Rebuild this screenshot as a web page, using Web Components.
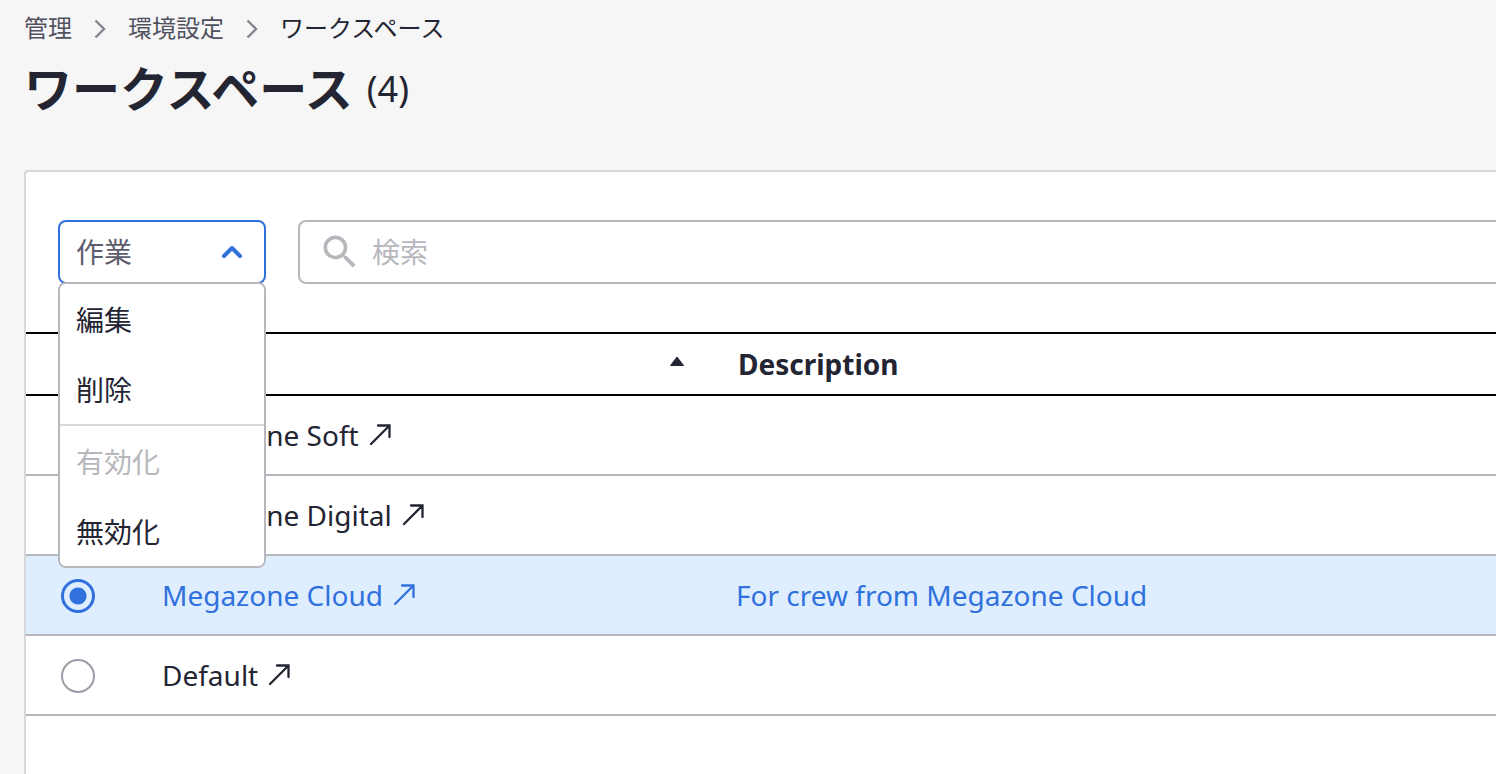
<!DOCTYPE html>
<html lang="ja">
<head>
<meta charset="utf-8">
<title>ワークスペース</title>
<style>
  body {
    margin: 0;
    background: #f6f6f6;
    color: #232533;
    font-family: "Noto Sans", "Noto Sans CJK JP", sans-serif;
    font-size: 28px;
    line-height: 40px;
    --blue: #3071dd;
    --line: #b7b7bd;
    --soft-line: #d8d8da;
    --muted: #b7b7bd;
    --selected: #deeeff;
  }
</style>
</head>
<body>
<workspace-page>
  <bread-crumb slot="breadcrumb"></bread-crumb>
  <page-title slot="title" count="4">ワークスペース</page-title>
  <action-menu slot="tools" label="作業"></action-menu>
  <search-box slot="tools" placeholder="検索"></search-box>
  <workspace-table></workspace-table>
</workspace-page>

<script>
const define = (name, html, setup) => {
  const template = document.createElement('template');
  template.innerHTML = '<style>*,*::before,*::after{box-sizing:border-box}</style>' + html;
  customElements.define(name, class extends HTMLElement {
    constructor() {
      super();
      this.attachShadow({ mode: 'open' }).append(template.content.cloneNode(true));
    }
    connectedCallback() { if (setup) setup(this, this.shadowRoot); }
  });
};

define('workspace-page', `
  <style>
    :host { display: flex; flex-direction: column; min-height: 100vh; padding-left: 24px; box-sizing: border-box; }
    header { padding-top: 8px; }
    main { flex: 1; margin-top: 46px; background: #fff; border: 2px solid var(--soft-line); border-width: 2px 0 0 2px; border-radius: 4px 0 0 0; }
    .tools { display: flex; gap: 32px; padding: 48px 0 48px 32px; }
  </style>
  <header><slot name="breadcrumb"></slot><slot name="title"></slot></header>
  <main><div class="tools"><slot name="tools"></slot></div><slot></slot></main>`);

define('bread-crumb', `
  <style>
    :host { display: block; font-size: 24px; }
    ol { display: flex; align-items: center; gap: 16px; margin: 0; padding: 0; list-style: none; }
    li { display: flex; align-items: center; gap: 16px; }
    a { color: #51515f; text-decoration: none; }
    svg { width: 24px; height: 24px; fill: none; stroke: #85858f; stroke-width: 2.4; }
  </style>
  <nav aria-label="breadcrumb"><ol>
    <li><a href="#admin">管理</a><svg viewBox="0 0 24 24" aria-hidden="true"><path d="M7.500 4.500 16 13l-8.500 8.500"/></svg></li>
    <li><a href="#preference">環境設定</a><svg viewBox="0 0 24 24" aria-hidden="true"><path d="M7.500 4.500 16 13l-8.500 8.500"/></svg></li>
    <li aria-current="page">ワークスペース</li>
  </ol></nav>`);

define('page-title', `
  <style>
    :host { display: block; }
    h1 { display: flex; align-items: center; gap: 14px; margin: 0; padding-top: 6px; font-size: 48px; line-height: 70px; font-weight: 700; }
    span { font-size: 36px; font-weight: 400; }
  </style>
  <h1><slot></slot><span></span></h1>`,
  (host, root) => { root.querySelector('span').textContent = '(' + host.getAttribute('count') + ')'; });

define('action-menu', `
  <style>
    :host { display: block; position: relative; z-index: 1; width: 208px; }
    button { font: inherit; color: inherit; background: #fff; text-align: left; cursor: pointer; }
    .toggle { display: flex; align-items: center; justify-content: space-between; width: 100%; height: 64px; padding: 0 16px; border: 2px solid var(--blue); border-radius: 8px; color: #5c5d6c; }
    svg { width: 32px; height: 32px; fill: none; stroke: var(--blue); stroke-width: 4; stroke-linecap: round; stroke-linejoin: round; }
    .menu { position: absolute; top: 62px; left: 0; right: 0; border: 2px solid var(--line); border-radius: 8px; background: #fff; overflow: hidden; }
    .menu button { display: block; width: 100%; height: 70px; padding: 2px 16px 0; border: 0; }
    .menu button:disabled { color: var(--muted); cursor: default; }
    hr { height: 2px; margin: 0; border: 0; background: var(--soft-line); }
  </style>
  <button class="toggle" type="button" aria-haspopup="menu" aria-expanded="true"><span></span>
    <svg viewBox="0 0 32 32" aria-hidden="true"><path d="m8 20 8-8 8 8"/></svg></button>
  <div class="menu" role="menu">
    <button type="button" role="menuitem">編集</button>
    <button type="button" role="menuitem">削除</button>
    <hr>
    <button type="button" role="menuitem" disabled>有効化</button>
    <button type="button" role="menuitem">無効化</button>
  </div>`,
  (host, root) => {
    root.querySelector('span').textContent = host.getAttribute('label');
    const toggle = root.querySelector('.toggle'), menu = root.querySelector('.menu');
    toggle.onclick = () => {
      menu.hidden = !menu.hidden;
      menu.style.display = menu.hidden ? 'none' : '';
      toggle.setAttribute('aria-expanded', String(!menu.hidden));
    };
  });

define('search-box', `
  <style>
    :host { display: block; flex: 1; min-width: 0; }
    label { display: flex; align-items: center; gap: 10px; height: 64px; padding-left: 18px; border: 2px solid var(--line); border-width: 2px 0 2px 2px; border-radius: 8px 0 0 8px; background: #fff; }
    svg { flex: none; width: 44px; height: 44px; fill: var(--muted); }
    input { flex: 1; min-width: 0; height: 40px; padding: 0; border: 0; outline: 0; background: none; font: inherit; color: inherit; }
    input::placeholder { color: var(--muted); opacity: 1; }
  </style>
  <label><svg viewBox="0 0 24 24" aria-hidden="true"><path d="M15.500 14h-.79l-.28-.27A6.470 6.470 0 0 0 16 9.500 6.500 6.500 0 1 0 9.500 16c1.610 0 3.090-.59 4.230-1.570l.27.28v.79l5 4.990L20.490 19l-4.990-5zm-6 0C7.010 14 5 11.990 5 9.500S7.010 5 9.500 5 14 7.010 14 9.500 11.990 14 9.500 14z"/></svg>
  <input type="text"></label>`,
  (host, root) => {
    const input = root.querySelector('input');
    input.placeholder = host.getAttribute('placeholder');
    input.setAttribute('aria-label', input.placeholder);
  });

define('workspace-table', `
  <style>
    :host { display: block; }
    table { width: 100%; table-layout: fixed; border-collapse: separate; border-spacing: 0; }
    .pick { width: 120px; }
    .name { width: 574px; }
    th, td { padding: 0 16px; text-align: left; vertical-align: middle; white-space: nowrap; border-bottom: 2px solid var(--line); }
    th { height: 64px; border-top: 2px solid #000; border-bottom-color: #000; font-weight: 700; }
    th:last-child { padding-left: 18px; }
    td { height: 80px; }
    td:first-child { padding: 2px 0 0 35px; }
    th button { display: flex; align-items: center; justify-content: space-between; width: 100%; padding: 0 18px 0 0; border: 0; background: none; font: inherit; color: inherit; }
    th svg { width: 18px; height: 18px; fill: currentColor; stroke: currentColor; stroke-width: 1; stroke-linejoin: round; }
    a { display: flex; width: fit-content; align-items: center; gap: 8px; color: inherit; text-decoration: none; }
    a svg { width: 26px; height: 26px; fill: none; stroke: currentColor; stroke-width: 2.300; stroke-linecap: round; }
    input { display: block; appearance: none; width: 34px; height: 34px; margin: 0; border: 2px solid #9c9ca8; border-radius: 50%; background: #fff; }
    input:checked { border: 3px solid var(--blue); background: radial-gradient(circle, var(--blue) 8px, #0000 9px); }
    tr:has(input:checked) { background: var(--selected); color: var(--blue); }
  </style>
  <table>
    <colgroup><col class="pick"><col class="name"><col></colgroup>
    <thead><tr><th aria-label="選択"></th><th aria-sort="ascending"><button type="button">Name<svg viewBox="0 0 18 18" aria-hidden="true"><path d="M9 2 15.500 10.500h-13z"/></svg></button></th><th>Description</th></tr></thead>
    <tbody></tbody>
  </table>`,
  (host, root) => {
    const rows = [
      { name: 'Megazone Soft', text: '' },
      { name: 'Megazone Digital', text: '' },
      { name: 'Megazone Cloud', text: 'For crew from Megazone Cloud', selected: true },
      { name: 'Default', text: '' }
    ];
    root.querySelector('tbody').innerHTML = rows.map(row => `
      <tr><td><input type="radio" name="workspace" aria-label="${row.name}"${row.selected ? ' checked' : ''}></td>
      <td><a href="#workspace">${row.name}<svg viewBox="0 0 26 26" aria-hidden="true"><path d="M4 22 22.500 3.500M11 3.500h11.500V15"/></svg></a></td>
      <td>${row.text}</td></tr>`).join('');
  });
</script>
</body>
</html>
